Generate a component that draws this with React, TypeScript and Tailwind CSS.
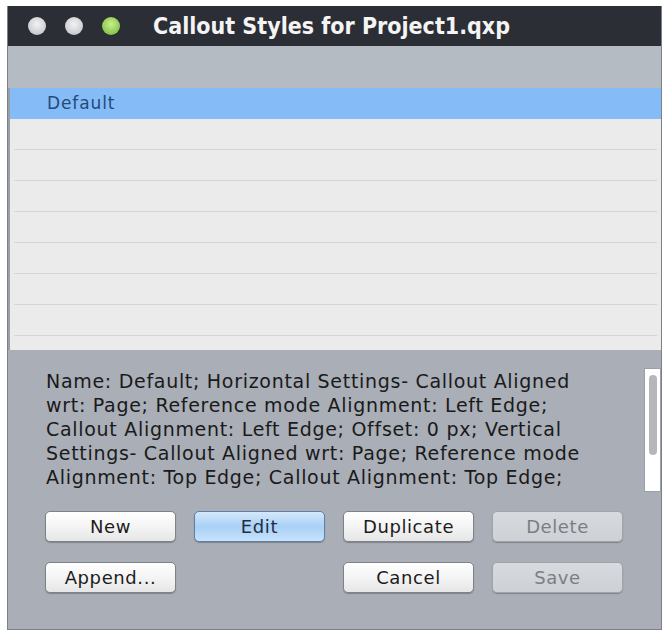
import React from "react";

const font = { fontFamily: "'DejaVu Sans', 'DejaVu Sans Condensed', sans-serif" };

function Btn({ label, kind = "normal" }: { label: string; kind?: "normal" | "primary" | "disabled" }) {
  const cls =
    kind === "primary"
      ? "bg-gradient-to-b from-[#d4e8fb] via-[#a9d0f5] to-[#c7e2fb] border-[#5f7fa6] text-[#1f2f44]"
      : kind === "disabled"
      ? "bg-gradient-to-b from-[#d7dade] to-[#cdd0d5] border-[#a1a5ab] text-[#7b7f85]"
      : "bg-gradient-to-b from-[#ffffff] via-[#f4f4f4] to-[#e6e6e6] border-[#7f8288] text-[#1c1c1c]";
  return (
    <div
      className={`w-[131px] h-[31px] rounded-[5px] border flex items-center justify-center text-[18px] tracking-[0.6px] shadow-[0_1px_1px_rgba(0,0,0,0.25)] ${cls}`}
    >
      {label}
    </div>
  );
}

export default function App() {
  const rows = Array.from({ length: 8 });
  return (
    <div className="w-[668px] h-[634px] bg-white pt-[6px] pl-[7px]" style={font}>
      <div className="w-[655px] h-[624px] flex flex-col border-l border-r border-b border-[#7d8087] overflow-hidden">
        {/* title bar */}
        <div className="h-[40px] bg-[#2b2e34] flex items-center pl-[20px] shrink-0">
          <div className="flex gap-[19px] items-center">
            <div className="w-[18px] h-[18px] rounded-full bg-[radial-gradient(circle_at_50%_40%,#f2f2f2,#b9bcc1)]" />
            <div className="w-[18px] h-[18px] rounded-full bg-[radial-gradient(circle_at_50%_40%,#f2f2f2,#b9bcc1)]" />
            <div className="w-[18px] h-[18px] rounded-full bg-[radial-gradient(circle_at_50%_40%,#c8f08a,#6fb33a)]" />
          </div>
          <div
            className="ml-[33px] text-[#f4f4f4] text-[23px] font-bold"
            style={{ fontFamily: "'DejaVu Sans Condensed', 'DejaVu Sans', sans-serif" }}
          >
            Callout Styles for Project1.qxp
          </div>
        </div>
        {/* gray band */}
        <div className="h-[42px] bg-[#b5bbc3] shrink-0" />
        {/* list */}
        <div className="h-[262px] bg-[#ebebeb] shrink-0 flex flex-col overflow-hidden border-l-2 border-[#9a9ea5]">
          <div className="h-[31px] bg-[#85bcf8] flex items-center pl-[37px] text-[#244a78] text-[17px] tracking-[0.9px] shrink-0">
            Default
          </div>
          {rows.map((_, i) => (
            <div key={i} className="h-[31px] border-b border-[#d6d6d6] shrink-0 mx-[4px]" />
          ))}
        </div>
        {/* bottom panel */}
        <div className="flex-1 bg-[#a9aeb7] flex flex-col pt-[18px]">
          <div className="flex">
            <div className="pl-[38px] w-[610px] text-[19px] tracking-[0.7px] leading-[24px] text-[#1a1a1a] pt-[1px] h-[124px] overflow-hidden whitespace-nowrap">
              <div>Name: Default; Horizontal Settings- Callout Aligned</div>
              <div>wrt: Page; Reference mode Alignment: Left Edge;</div>
              <div>Callout Alignment: Left Edge; Offset: 0 px; Vertical</div>
              <div>Settings- Callout Aligned wrt: Page; Reference mode</div>
              <div>Alignment: Top Edge; Callout Alignment: Top Edge;</div>
            </div>
            <div className="ml-[26px] w-[17px] h-[124px] bg-white border border-[#9ca0a6] flex justify-center pt-[6px]">
              <div className="w-[8px] h-[80px] rounded-full bg-[#b5b7ba]" />
            </div>
          </div>
          <div className="flex flex-col gap-[20px] pl-[37px] mt-[19px]">
            <div className="flex gap-[18px]">
              <Btn label="New" />
              <Btn label="Edit" kind="primary" />
              <Btn label="Duplicate" />
              <Btn label="Delete" kind="disabled" />
            </div>
            <div className="flex gap-[18px]">
              <Btn label="Append..." />
              <div className="w-[131px]" />
              <Btn label="Cancel" />
              <Btn label="Save" kind="disabled" />
            </div>
          </div>
        </div>
      </div>
    </div>
  );
}
